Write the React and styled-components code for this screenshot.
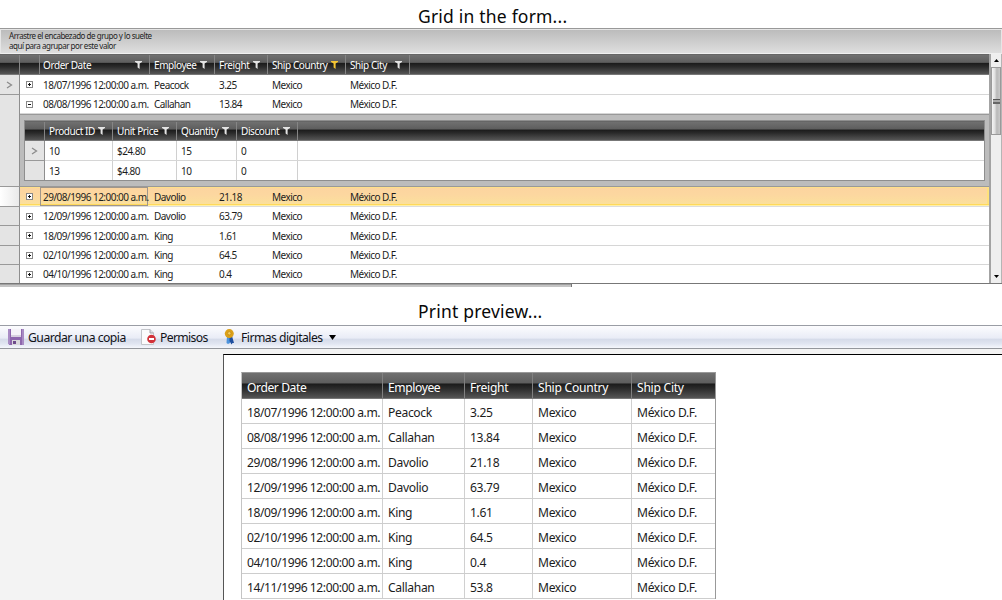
import React from "react";
import styled, { createGlobalStyle, css } from "styled-components";

const Global = createGlobalStyle`
  * { box-sizing: border-box; }
  html, body { margin: 0; padding: 0; background: #fff; }
  body { width: 1002px; height: 600px; overflow: hidden; font-family: "Noto Sans", "Open Sans", sans-serif; }
`;

const Screen = styled.div`
  width: 1002px;
  height: 600px;
  overflow: hidden;
  display: flex;
  flex-direction: column;
  background: #fff;
  color: #1c1c1c;
`;

const Title = styled.h1`
  flex: none;
  margin: 0;
  height: ${(p) => p.$height}px;
  padding: ${(p) => p.$top}px 0 0 418px;
  font-size: 17.5px;
  line-height: 24px;
  font-weight: 400;
  letter-spacing: 0.2px;
  color: #080808;
  white-space: nowrap;
`;

const darkBar = "linear-gradient(#707070 0, #5e5e5e 38%, #4a4a4a 41%, #1b1b1b 44%, #2b2b2b 62%, #555 100%)";

const GridFrame = styled.section`
  flex: none;
  height: 256px;
  display: flex;
  flex-direction: column;
  border-top: 1px solid #999;
`;

const GroupPanel = styled.div`
  height: 25px;
  border: 1px solid #e6e6e6;
  border-bottom-color: #f0f0f0;
  background: linear-gradient(#bcbcbc, #dedede);
  padding: 1px 0 0 8px;
  font-size: 8px;
  line-height: 10px;
  letter-spacing: -0.47px;
  color: #222;
`;

const GridBody = styled.div`
  display: flex;
  height: 230px;
  border-bottom: 1px solid #777;
`;

const Rows = styled.div`
  width: 989px;
  flex: none;
  overflow: hidden;
`;

const HeaderRow = styled.div`
  display: flex;
  height: ${(p) => p.$h ?? 21}px;
  background: ${darkBar};
  border-top: 1px solid #666;
  border-bottom: 1px solid #777;
`;

const HeadCell = styled.div`
  flex: none;
  width: ${(p) => p.$w}px;
  display: flex;
  align-items: center;
  justify-content: space-between;
  padding: 0 7px 0 ${(p) => p.$pl ?? 4}px;
  border-right: 1px solid #858585;
  color: #fff;
  font-size: 10px;
  letter-spacing: -0.42px;
  white-space: nowrap;
`;

const Row = styled.div`
  display: flex;
  height: ${(p) => p.$h}px;
  border-bottom: 1px solid #d6d6d6;
  ${(p) => p.$selected && css`
    background: linear-gradient(#fcd49f, #fcd7a0 40%, #fbe29b);
    border-bottom-color: #dcdcdc;
    box-shadow: inset 0 1px #ffe08a, inset 0 -1px #fff0a8, inset 0 -2px #ffd95a, inset -2px 0 #ffe27a;
  `}
`;

const Handle = styled.div`
  flex: none;
  width: 20px;
  display: flex;
  align-items: center;
  justify-content: center;
  background: ${(p) => (p.$light ? "linear-gradient(90deg, #fff, #e9e9e9)" : "#e4e4e4")};
  border-right: 1px solid #8e8e8e;
  border-bottom: 1px solid #999;
  margin-bottom: -1px;
  ${(p) => p.$open && "border-bottom: 0;"}
`;

const Cell = styled.div`
  flex: none;
  width: ${(p) => p.$w}px;
  display: flex;
  align-items: center;
  padding-left: ${(p) => p.$pl ?? 4}px;
  font-size: 10px;
  letter-spacing: -0.53px;
  white-space: nowrap;
  ${(p) => p.$lined && "border-right: 1px solid #d0d0d0;"}
  ${(p) => p.$focus && "border: 1px solid #a0968a; padding-left: 2px;"}
`;

const ExpandSlot = styled.div`
  flex: none;
  width: 20px;
  display: flex;
  align-items: center;
  padding-left: 6px;
`;

const DetailWrap = styled.div`
  display: flex;
  height: 73px;
`;

const DetailHandle = styled.div`
  width: 20px;
  background: #e4e4e4;
  border-right: 1px solid #8e8e8e;
  border-bottom: 1px solid #999;
`;

const DetailPanel = styled.div`
  flex: 1;
  background: #bcbcbc;
  border-top: 1px solid #999;
  border-bottom: 1px solid #999;
  padding: 5px 4px;
`;

const DetailGrid = styled.div`
  height: 61px;
  border: 1px solid #8e8e8e;
  background: #fff;
  overflow: hidden;
`;

const ScrollBar = styled.div`
  width: 13px;
  display: flex;
  flex-direction: column;
  align-items: stretch;
  border-left: 2px solid #a3a3a3;
  border-right: 1px solid #b5b5b5;
  background: #efefef;
`;

const ArrowButton = styled.div`
  height: 13px;
  display: flex;
  align-items: center;
  justify-content: center;
  ${(p) => p.$push && "margin-top: auto;"}
`;

const Thumb = styled.div`
  height: 68px;
  border: 1px solid #9a9a9a;
  background: linear-gradient(90deg, #f4f4f4, #e0e0e0 35%, #b8b8b8 60%, #c9c9c9);
  display: flex;
  flex-direction: column;
  align-items: center;
  justify-content: center;
`;

const Grip = styled.div`
  width: 7px;
  height: 5px;
  border-top: 1px solid #555;
  border-bottom: 2px solid #666;
  background: #aaa;
`;

const HorizontalThumb = styled.div`
  width: 572px;
  height: 3px;
  border-right: 1px solid #777;
  background: linear-gradient(#a0a0a0 0 1px, #c4c4c4 1px);
`;

const ToolBar = styled.nav`
  flex: none;
  height: 24px;
  display: flex;
  align-items: center;
  padding-left: 8px;
  border-top: 1px solid #9a9da5;
  border-bottom: 1px solid #94979d;
  background: linear-gradient(#fcfcfe 0, #e9ecf6 55%, #d5dbe9 60%, #e0e5f1 80%, #f5f7fc 100%);
`;

const ToolItem = styled.div`
  display: flex;
  align-items: center;
  gap: ${(p) => p.$gap}px;
  width: ${(p) => p.$w}px;
  font-size: 12.2px;
  letter-spacing: ${(p) => p.$ls}px;
  white-space: nowrap;
  color: #101218;
`;

const PreviewArea = styled.section`
  flex: 1;
  padding: 5px 0 0 223px;
  background: #f3f3f3;
`;

const Paper = styled.div`
  height: 246px;
  padding: 17px 0 0 17px;
  background: #fff;
  border-left: 1px solid #555;
  border-top: 1px solid #000;
`;

const PrintTable = styled.div`
  width: 475px;
  border: 1px solid #999;
  border-left-color: #c4c4c4;
  border-bottom: 0;
`;

const PrintRow = styled.div`
  display: flex;
  height: ${(p) => (p.$head ? 26 : 25)}px;
  border-bottom: 1px solid ${(p) => (p.$head ? "#777" : "#cdcdcd")};
  color: ${(p) => (p.$head ? "#fff" : "#1c1c1c")};
  ${(p) => p.$head && css`background: ${darkBar};`}
`;

const PrintCell = styled.div`
  flex: none;
  width: ${(p) => p.$w}px;
  display: flex;
  align-items: center;
  padding: 3px 0 0 5px;
  font-size: 12.1px;
  letter-spacing: ${(p) => p.$ls ?? -0.34}px;
  white-space: nowrap;
  border-right: 1px solid ${(p) => (p.$head ? "#808080" : "#d0d0d0")};
  &:last-child { border-right: 0; }
`;

const Funnel = ({ color = "#e4e4e4" }) => (
  <svg width="7" height="8" viewBox="0 0 7 8">
    <path d="M0 0h7v1L4.600 2.500V8L2.600 6.400V2.500L0 1z" fill={color} />
  </svg>
);

const Expander = ({ open }) => (
  <svg width="7" height="7" viewBox="0 0 7 7" shapeRendering="crispEdges">
    <path d="M0 0h7v7H0z" fill="#888" />
    <path d="M1 1h5v5H1z" fill="#fff" />
    <path d="M2 3h3v1H2z" fill="#111" />
    {!open && <path d="M3 2h1v3H3z" fill="#111" />}
  </svg>
);

const Chevron = () => (
  <svg width="7" height="8" viewBox="0 0 7 8">
    <path d="M1 1l4.500 3L1 7" fill="none" stroke="#8c8c8c" strokeWidth="1.3" />
  </svg>
);

const Triangle = ({ up, w = 5, h = 3 }) => (
  <svg width={w} height={h} viewBox="0 0 6 4" preserveAspectRatio="none">
    <path d={up ? "M0 4h6L3 0z" : "M0 0h6L3 4z"} fill="#000" />
  </svg>
);

const DiskIcon = () => (
  <svg width="16" height="16" viewBox="0 0 16 16">
    <path d="M0 0h16v16H1.500L0 14.500z" fill="#8d66ad" />
    <path d="M0 0h2v15H0zM14 0h2v16h-2z" fill="#a88bc4" />
    <path d="M3 0h10v8H3z" fill="#f5f3f8" />
    <path d="M3 6h10v2H3z" fill="#d7d0df" />
    <path d="M4 11h8v5H4z" fill="#d9d8dc" />
    <path d="M5 12h3v3H5z" fill="#6d4a8c" />
  </svg>
);

const PermissionIcon = () => (
  <svg width="15" height="16" viewBox="0 0 15 16">
    <path d="M.5.5h8.500L12.500 4v11.500H.5z" fill="#fbfbfc" stroke="#c3c5ca" />
    <path d="M9 .5V4h3.500" fill="#dddfe4" stroke="#a0a3aa" />
    <circle cx="10.500" cy="10" r="4.300" fill="#d2323a" />
    <path d="M8 9h5v2H8z" fill="#fff" />
  </svg>
);

const RibbonIcon = () => (
  <svg width="11" height="16" viewBox="0 0 11 16">
    <path d="M3 7h3v7l-2 1-1.500-1z" fill="#4d93dc" />
    <path d="M5.500 7h2.500l2 7H8.500l-1 1.500L5.500 12z" fill="#1f4f9f" />
    <circle cx="5.300" cy="4.600" r="4.500" fill="#dba018" />
    <circle cx="5.300" cy="4.300" r="1.700" fill="#f3cf62" stroke="#c48a10" strokeWidth=".8" />
  </svg>
);

const time = " 12:00:00 a.m.";
const orders = [
  ["18/07/1996", "Peacock", "3.25"],
  ["08/08/1996", "Callahan", "13.84"],
  ["29/08/1996", "Davolio", "21.18"],
  ["12/09/1996", "Davolio", "63.79"],
  ["18/09/1996", "King", "1.61"],
  ["02/10/1996", "King", "64.5"],
  ["04/10/1996", "King", "0.4"],
  ["14/11/1996", "Callahan", "53.8"],
].map(([d, e, f]) => [d + time, e, f, "Mexico", "México D.F."]);

const orderWidths = [110, 65, 53, 78, 64];
const orderTitles = ["Order Date", "Employee", "Freight", "Ship Country", "Ship City"];
const rowHeights = [20, 19, 20, 19, 20, 19, 19];
const productWidths = [68, 64, 60, 61];
const productTitles = ["Product ID", "Unit Price", "Quantity", "Discount"];
const products = [["10", "$24.80", "15", "0"], ["13", "$4.80", "10", "0"]];
const printWidths = [141, 82, 68, 99, 83];

const OrderRow = ({ order, index }) => (
  <Row $h={rowHeights[index]} $selected={index === 2}>
    <Handle $light={index === 2} $open={index === 1}>{index === 0 && <Chevron />}</Handle>
    <ExpandSlot><Expander open={index === 1} /></ExpandSlot>
    {order.map((value, i) => (
      <Cell key={i} $w={index === 2 && i === 0 ? 108 : orderWidths[i] + (index === 2 && i === 1 ? 2 : 0)}
        $pl={i === 0 ? 3 : index === 2 && i === 1 ? 6 : 4}
        $focus={index === 2 && i === 0}>{value}</Cell>
    ))}
  </Row>
);

const Details = () => (
  <DetailWrap>
    <DetailHandle />
    <DetailPanel>
      <DetailGrid>
        <HeaderRow $h={20}>
          <HeadCell $w={20} />
          {productTitles.map((t, i) => (
            <HeadCell key={t} $w={productWidths[i]}>{t}<Funnel /></HeadCell>
          ))}
        </HeaderRow>
        {products.map((p) => (
          <Row key={p[0]} $h={20}>
            <Handle>{p === products[0] && <Chevron />}</Handle>
            {p.map((v, j) => <Cell key={j} $w={productWidths[j]} $lined>{v}</Cell>)}
          </Row>
        ))}
      </DetailGrid>
    </DetailPanel>
  </DetailWrap>
);

export default function App() {
  return (
    <Screen>
      <Global />
      <Title $height={28} $top={4}>Grid in the form...</Title>
      <GridFrame>
        <GroupPanel>Arrastre el encabezado de grupo y lo suelte<br />aquí para agrupar por este valor</GroupPanel>
        <GridBody>
          <Rows>
            <HeaderRow>
              <HeadCell $w={20} />
              <HeadCell $w={20} />
              {orderTitles.map((t, i) => (
                <HeadCell key={t} $w={orderWidths[i]} $pl={i ? 4 : 3}>
                  {t}<Funnel color={i === 3 ? "#f5c533" : undefined} />
                </HeadCell>
              ))}
            </HeaderRow>
            {orders.slice(0, 2).map((o, i) => <OrderRow key={o[0]} order={o} index={i} />)}
            <Details />
            {orders.slice(2, 7).map((o, i) => <OrderRow key={o[0]} order={o} index={i + 2} />)}
          </Rows>
          <ScrollBar>
            <ArrowButton><Triangle up /></ArrowButton>
            <Thumb><Grip /></Thumb>
            <ArrowButton $push><Triangle /></ArrowButton>
          </ScrollBar>
        </GridBody>
      </GridFrame>
      <HorizontalThumb />
      <Title $height={38} $top={12}>Print preview...</Title>
      <ToolBar>
        <ToolItem $w={133} $gap={4} $ls={-0.5}><DiskIcon />Guardar una copia</ToolItem>
        <ToolItem $w={83} $gap={4} $ls={-0.65}><PermissionIcon />Permisos</ToolItem>
        <ToolItem $w={120} $gap={6} $ls={-0.53}><RibbonIcon />Firmas digitales<Triangle w={7} h={5} /></ToolItem>
      </ToolBar>
      <PreviewArea>
        <Paper>
          <PrintTable>
            <PrintRow $head>
              {orderTitles.map((t, i) => <PrintCell key={t} $w={printWidths[i]} $ls={i < 2 ? -0.4 : -0.26} $head>{t}</PrintCell>)}
            </PrintRow>
            {orders.map((o) => (
              <PrintRow key={o[0]}>
                {o.map((v, i) => <PrintCell key={i} $w={printWidths[i]} $ls={i === 0 ? -0.42 : undefined}>{v}</PrintCell>)}
              </PrintRow>
            ))}
          </PrintTable>
        </Paper>
      </PreviewArea>
    </Screen>
  );
}
